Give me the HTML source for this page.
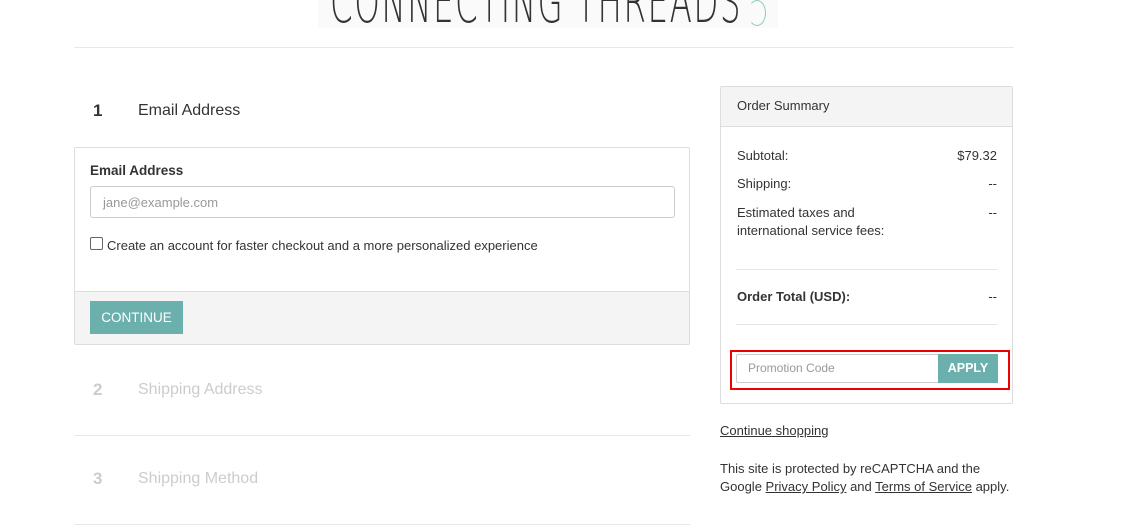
<!DOCTYPE html>
<html><head><meta charset="utf-8"><style>
*{box-sizing:border-box;margin:0;padding:0}
body{width:1137px;height:530px;overflow:hidden;background:#fff;font-family:"Liberation Sans",Arial,sans-serif;color:#333;position:relative}
.a{position:absolute}
.t{font-size:13px;white-space:nowrap}
u{text-decoration:underline}
</style></head><body>
<div class="a" style="left:318px;top:0;width:460px;height:28px;background:#fafafa;overflow:hidden">
 <div class="a" style="left:12px;top:-30px;font-size:44px;color:#333;letter-spacing:2px;transform:scaleX(0.74) scaleY(1.3);transform-origin:0 0;white-space:nowrap;font-family:'DejaVu Sans','Liberation Sans',sans-serif;font-weight:200">CONNECTING THREADS</div>
 <div class="a" style="left:430px;top:0px;width:18px;height:26px;border:1.5px solid #8ccfb3;border-radius:50%;border-left-color:transparent"></div>
</div>
<div class="a" style="left:74px;top:47px;width:940px;height:1px;background:#e8e8e8"></div>

<div class="a" style="left:93px;top:101px;font-size:17px;font-weight:bold;color:#333">1</div>
<div class="a" style="left:138px;top:102px;font-size:16px;color:#333">Email Address</div>

<div class="a" style="left:74px;top:147px;width:616px;height:198px;border:1px solid #ddd;border-radius:2px;overflow:hidden">
 <div class="a t" style="left:15px;top:15px;font-weight:bold;font-size:13.5px">Email Address</div>
 <div class="a" style="left:15px;top:38px;width:585px;height:32px;border:1px solid #ccc;border-radius:3px"></div>
 <div class="a t" style="left:28px;top:47px;color:#999">jane@example.com</div>
 <div class="a" style="left:15px;top:89px;width:13px;height:13px;border:1px solid #666;border-radius:2px"></div>
 <div class="a t" style="left:32px;top:90px">Create an account for faster checkout and a more personalized experience</div>
 <div class="a" style="left:0;top:143px;width:616px;height:55px;background:#f4f4f4;border-top:1px solid #ddd"></div>
 <div class="a" style="left:15px;top:153px;width:93px;height:33px;background:#6bb0ad;color:#fff;font-size:13.5px;line-height:33px;text-align:center">CONTINUE</div>
</div>

<div class="a" style="left:93px;top:380px;font-size:17px;font-weight:bold;color:#ccc">2</div>
<div class="a" style="left:138px;top:381px;font-size:16px;color:#ccc">Shipping Address</div>
<div class="a" style="left:74px;top:435px;width:616px;height:1px;background:#e8e8e8"></div>
<div class="a" style="left:93px;top:469px;font-size:17px;font-weight:bold;color:#ccc">3</div>
<div class="a" style="left:138px;top:470px;font-size:16px;color:#ccc">Shipping Method</div>
<div class="a" style="left:74px;top:524px;width:616px;height:1px;background:#e8e8e8"></div>

<div class="a" style="left:720px;top:86px;width:293px;height:318px;border:1px solid #ddd;border-radius:2px">
 <div class="a" style="left:0;top:0;width:291px;height:40px;background:#f4f4f4;border-bottom:1px solid #ddd"></div>
 <div class="a t" style="left:16px;top:11px">Order Summary</div>
 <div class="a t" style="left:16px;top:61px">Subtotal:</div>
 <div class="a t" style="right:15px;top:61px">$79.32</div>
 <div class="a t" style="left:16px;top:89px">Shipping:</div>
 <div class="a t" style="right:15px;top:89px">--</div>
 <div class="a t" style="left:16px;top:117px;line-height:18px">Estimated taxes and<br>international service fees:</div>
 <div class="a t" style="right:15px;top:118px">--</div>
 <div class="a" style="left:15px;top:182px;width:261px;height:1px;background:#e5e5e5"></div>
 <div class="a t" style="left:16px;top:202px;font-weight:bold">Order Total (USD):</div>
 <div class="a t" style="right:15px;top:202px">--</div>
 <div class="a" style="left:15px;top:237px;width:261px;height:1px;background:#e5e5e5"></div>
 <div class="a" style="left:9px;top:263px;width:280px;height:40px;border:2px solid #e00"></div>
 <div class="a" style="left:15px;top:267px;width:203px;height:29px;border:1px solid #ccc;border-right:none;border-radius:2px 0 0 2px"></div>
 <div class="a" style="left:27px;top:274px;font-size:12px;color:#999">Promotion Code</div>
 <div class="a" style="left:217px;top:267px;width:60px;height:29px;background:#6bb0ad;color:#fff;font-size:12.5px;font-weight:bold;line-height:29px;text-align:center">APPLY</div>
</div>
<div class="a t" style="left:720px;top:423px"><u>Continue shopping</u></div>
<div class="a t" style="left:720px;top:460px;line-height:18px">This site is protected by reCAPTCHA and the<br>Google <u>Privacy Policy</u> and <u>Terms of Service</u> apply.</div>
</body></html>
